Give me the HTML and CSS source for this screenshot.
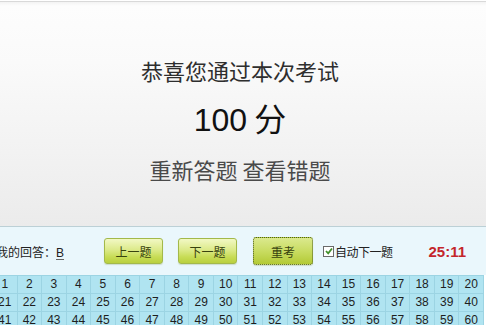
FILE: index.html
```html
<!DOCTYPE html>
<html lang="zh-CN">
<head>
<meta charset="utf-8">
<title>考试结果</title>
<link rel="stylesheet" href="styles.css">
</head>
<body>
<div class="page">
  <section class="result">
    <h1 class="result-title">恭喜您通过本次考试</h1>
    <div class="result-score"><span class="num">100</span> 分</div>
    <div class="result-links"><a class="link">重新答题</a> <a class="link">查看错题</a></div>
  </section>
  <section class="toolbar">
    <span class="answer">我的回答：<u>B</u></span>
    <button class="btn btn-prev">上一题</button>
    <button class="btn btn-next">下一题</button>
    <button class="btn btn-retake">重考</button>
    <label class="auto"><span class="check"><svg width="8" height="8" viewBox="0 0 8 8"><path d="M1 4 L3.2 6.3 L7 1.5" fill="none" stroke="#3f8f2a" stroke-width="1.8"/></svg></span>自动下一题</label>
    <span class="timer">25:11</span>
  </section>
  <section class="grid" id="grid"></section>
</div>
<script src="app.js"></script>
</body>
</html>
```
FILE: app.js
```js
var g = document.getElementById('grid');
for (var i = 1; i <= 60; i++) {
  var c = document.createElement('div');
  c.className = 'cell';
  c.textContent = i;
  g.appendChild(c);
}
```
FILE: styles.css
```css
html, body {
  margin: 0;
  padding: 0;
  background: #ffffff;
  overflow: hidden;
}
body {
  width: 486px;
  height: 325px;
  font-family: "Noto Sans CJK SC", "Liberation Sans", sans-serif;
}
.page {
  display: flex;
  flex-direction: column;
  padding-top: 1px;
}
.result {
  height: 225px;
  border-top: 1px solid #d9d9d9;
  background: linear-gradient(#f3f3f3 0px, #fdfdfd 4px, #fafafa 60px, #f2f2f2 150px, #ebebeb 225px);
  display: flex;
  flex-direction: column;
  align-items: center;
  padding-right: 6px;
  padding-top: 53px;
  box-sizing: border-box;
}
.result-title {
  margin: 0;
  font-weight: normal;
  font-size: 22px;
  line-height: 30px;
  color: #2e2e2e;
}
.result-score {
  margin-top: 12px;
  font-size: 32px;
  line-height: 40px;
  color: #111;
}
.result-score .num {
  font-family: "Liberation Sans", sans-serif;
}
.result-links {
  margin-top: 14px;
  font-size: 22px;
  line-height: 30px;
  color: #4a4a4a;
}
.toolbar {
  height: 48px;
  border-top: 1px solid #bcd0d6;
  background: #eaf7fc;
  display: flex;
  align-items: center;
  font-size: 12px;
  color: #222;
}
.answer {
  margin-left: -4px;
  width: 108px;
  flex: none;
}
.answer u {
  font-family: "Liberation Sans", sans-serif;
  text-decoration-color: #666;
  text-underline-offset: 2px;
}
.btn {
  flex: none;
  width: 59px;
  height: 26px;
  margin: 0;
  padding: 0;
  font-family: "Noto Sans CJK SC", sans-serif;
  font-size: 12px;
  color: #38420f;
  border: 1px solid #a3b94a;
  border-radius: 3px;
  background: linear-gradient(#f2f8c4 0%, #dcea8a 45%, #c7dc55 75%, #b9d03e 100%);
  box-shadow: 0 1px 1px rgba(120,140,60,0.25);
}
.btn-next {
  margin-left: 15px;
}
.btn-retake {
  margin-left: 16px;
  width: 60px;
  height: 28px;
  border: 1px dotted #4f5e1c;
  background: linear-gradient(#dbe98e 0%, #c9dc62 50%, #b3ca35 100%);
}
.auto {
  margin-left: 10px;
  display: flex;
  align-items: center;
  flex: none;
  letter-spacing: -0.5px;
}
.check {
  width: 9px;
  height: 9px;
  border: 1px solid #6a6a6a;
  background: #fff;
  display: flex;
  align-items: center;
  justify-content: center;
  margin-right: 1px;
}
.timer {
  margin-left: 36px;
  font-family: "Liberation Sans", sans-serif;
  font-weight: bold;
  font-size: 15px;
  color: #c4262b;
}
.grid {
  width: 491px;
  margin-left: -7px;
  display: grid;
  grid-template-columns: repeat(20, 1fr);
  background: #b0e4f1;
  border-top: 1px solid #9cd4e3;
}
.cell {
  height: 17px;
  line-height: 17px;
  text-align: center;
  border-right: 1px solid #9cd4e3;
  border-bottom: 1px solid #9cd4e3;
  font-family: "Liberation Sans", sans-serif;
  font-size: 12px;
  color: #1e1e1e;
}
```
